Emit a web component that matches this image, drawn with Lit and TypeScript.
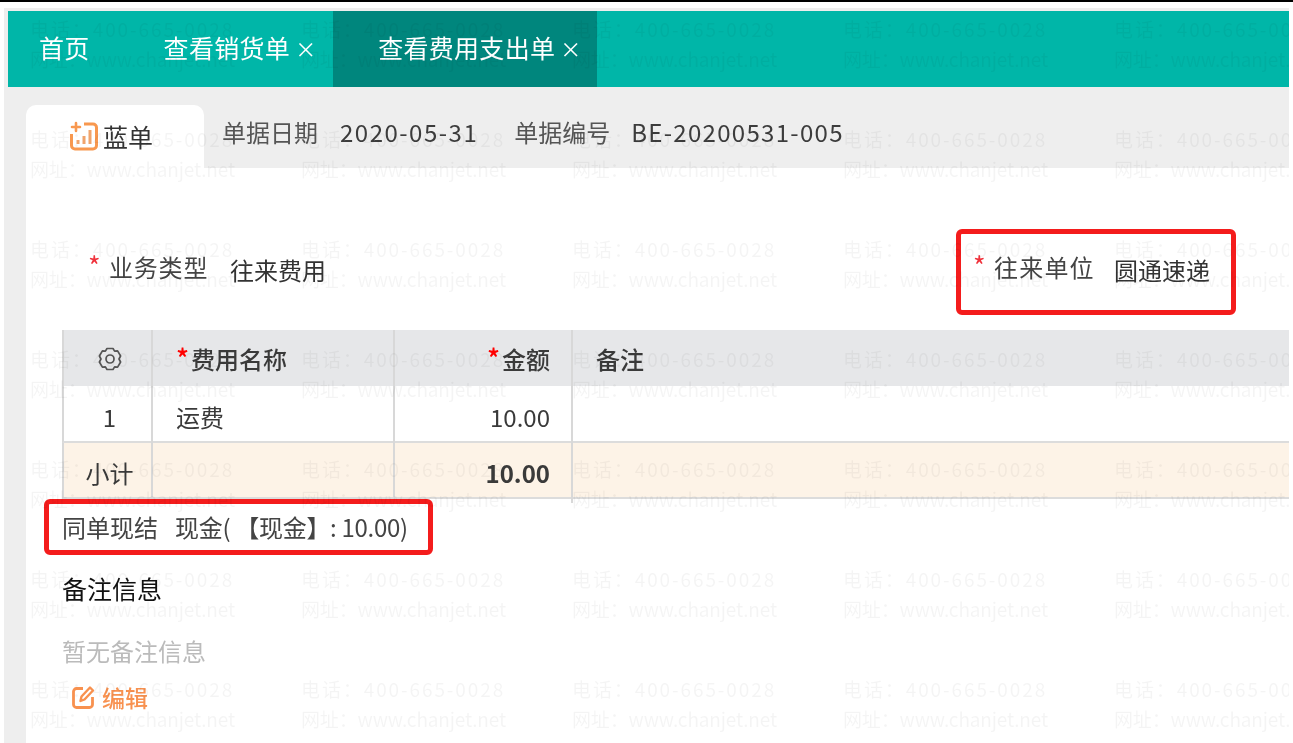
import { LitElement, html, css } from "lit";
import { customElement } from "lit/decorators.js";

const cols = [0, 1, 2, 3, 4];
const rows = [0, 1, 2, 3, 4, 5, 6];

@customElement("app-root")
export class AppRoot extends LitElement {
  static styles = css`
    :host {
      display: block;
      position: relative;
      height: 743px;
      overflow: hidden;
      background: #fff;
      font-family: "Noto Sans CJK SC", "Noto Sans", sans-serif;
      font-size: 24px;
      color: #3c3c3c;
    }
    .topline { height: 2px; background: #000; }
    .page { filter: blur(0.45px); }
    .shell {
      position: relative;
      margin: 6px 4px 0 4px;
      height: 735px;
      background: #eeeeee;
      overflow: hidden;
    }
    .tabs {
      display: flex;
      margin: 3px 0 0 4px;
      height: 76px;
      background: #00b6a8;
      color: #fff;
      font-size: 25px;
      line-height: 73px;
      letter-spacing: 0.3px;
    }
    .tab { display: flex; padding: 0 22px 0 45px; }
    .tab.first { padding: 0 29px 0 31px; }
    .tab.active { background: #00867d; padding-right: 21px; }
    .close { width: 16px; margin-left: 5px; text-align: center; font-size: 21px; line-height: 75px; }
    .band {
      display: flex;
      height: 81px;
      padding-left: 22px;
      box-sizing: border-box;
    }
    .mode {
      display: flex;
      align-items: center;
      justify-content: center;
      align-self: flex-end;
      gap: 5px;
      width: 178px;
      height: 63px;
      padding: 0 7px 2px 0;
      box-sizing: border-box;
      background: #fff;
      border-radius: 10px 10px 0 0;
      font-size: 25px;
      color: #333;
    }
    .mode svg { display: block; }
    .meta {
      display: flex;
      margin: 27px 0 0 18px;
      line-height: 36px;
      height: 36px;
    }
    .meta .k { color: #555; margin-right: 22px; }
    .meta .v { letter-spacing: 1.3px; }
    .meta .v.date { letter-spacing: 1.5px; margin-right: 36px; }
    .meta .k.no2 { margin-right: 21px; }
    .body {
      margin-left: 22px;
      height: 575px;
      background: #fff;
      padding-left: 36px;
    }
    .form {
      display: flex;
      justify-content: space-between;
      height: 162px;
      padding: 79px 79px 0 26px;
      box-sizing: border-box;
    }
    .field { display: flex; height: 40px; line-height: 40px; }
    .star { color: #f0323c; width: 21px; font-size: 27px; line-height: 38px; }
    .field .k { color: #444; width: 121px; letter-spacing: 0.8px; }
    .field .k.wide { letter-spacing: 1.2px; width: 120px; }
    .field .v { color: #333; padding-top: 3px; }
    .table { color: #3a3a3a; }
    .row {
      display: grid;
      grid-template-columns: 89px 242px 178px 1fr;
      height: 57px;
      line-height: 61px;
      box-sizing: border-box;
      border-bottom: 2px solid #dcdcdc;
      border-left: 2px solid #d8d8d8;
    }
    .row > div {
      border-right: 2px solid #d8d8d8;
      padding: 0 23px;
      white-space: nowrap;
    }
    .row > div:last-child { border-right: 0; }
    .row .idx { padding: 0 0 0 4px; text-align: center; display: flex; align-items: center; justify-content: center; }
    .row .num { text-align: right; padding-right: 21px; }
    .row.head { background: #e6e7e9; font-weight: 500; border-bottom: 0; height: 56px; line-height: 58px; }
    .row.sub { background: #fdf3e7; height: 56px; line-height: 60px; }
    .row .bold { font-weight: 700; }
    .req { color: #f00; font-weight: 500; font-size: 27px; line-height: 1; margin-right: 2px; }
    .cash { display: flex; gap: 17px; height: 56px; line-height: 56px; color: #444; }
    .amount { letter-spacing: -0.3px; }
    .title { margin-top: 13px; line-height: 40px; font-size: 25px; color: #111; }
    .empty { margin-top: 23px; line-height: 40px; color: #bbbbbb; }
    .edit {
      display: flex;
      align-items: center;
      gap: 7px;
      margin: 6px 0 0 10px;
      line-height: 40px;
      height: 40px;
      color: #f8914f;
      font-weight: 500;
      font-size: 23px;
    }
    .mark {
      position: absolute;
      left: 26px;
      top: 6px;
      display: grid;
      grid-template-columns: repeat(5, 271px);
      grid-auto-rows: 110px;
      pointer-events: none;
      color: rgba(0, 0, 0, 0.042);
      font-size: 19px;
      line-height: 30px;
    }
    .mark .l1 { letter-spacing: 1.9px; white-space: nowrap; }
    .mark .l2 { white-space: nowrap; letter-spacing: -0.15px; }
    .callout {
      position: absolute;
      border: 5px solid #f41c1c;
      border-radius: 6px;
      box-sizing: border-box;
      pointer-events: none;
    }
    .c1 { left: 952px; top: 221px; width: 280px; height: 86px; }
    .c2 { left: 40px; top: 491px; width: 389px; height: 56px; }
  `;

  render() {
    return html`
      <div class="topline"></div>
      <div class="page">
        <div class="shell">
          <div class="tabs">
            <div class="tab first">首页</div>
            <div class="tab">查看销货单<span class="close">×</span></div>
            <div class="tab active">查看费用支出单<span class="close">×</span></div>
          </div>
          <div class="band">
            <div class="mode">
              <svg width="28" height="30" viewBox="0 0 28 30" fill="none" stroke="#f8984f">
                <path d="M14 3h9a3.5 3.5 0 0 1 3.5 3.5v18a3.5 3.5 0 0 1-3.5 3.5H5a3.5 3.5 0 0 1-3.5-3.5V13" stroke-width="3"/>
                <path d="M6 2v8M2 6h8" stroke-width="2.6" stroke-linecap="round"/>
                <path d="M8 19v4M14 15v8M20 9v14" stroke="#f0a46c" stroke-width="3"/>
              </svg>
              <span>蓝单</span>
            </div>
            <div class="meta">
              <span class="k">单据日期</span><span class="v date">2020-05-31</span>
              <span class="k no2">单据编号</span><span class="v">BE-20200531-005</span>
            </div>
          </div>
          <div class="body">
            <div class="form">
              <div class="field"><span class="star">*</span><span class="k">业务类型</span><span class="v">往来费用</span></div>
              <div class="field"><span class="star">*</span><span class="k wide">往来单位</span><span class="v">圆通速递</span></div>
            </div>
            <div class="table">
              <div class="row head">
                <div class="idx">
                  <svg width="24" height="26" viewBox="0 0 24 26" fill="none" stroke="#555" stroke-width="1.7" stroke-linejoin="round">
                    <path d="M9 2.5h6l1.6 2.6 3-.2 3 5.1-1.6 3 1.6 3-3 5.1-3-.2L15 23.5H9l-1.6-2.6-3 .2-3-5.1 1.6-3-1.6-3 3-5.1 3 .2z"/>
                    <circle cx="12" cy="13" r="4"/>
                  </svg>
                </div>
                <div><span class="req">*</span>费用名称</div>
                <div class="num"><span class="req">*</span>金额</div>
                <div>备注</div>
              </div>
              <div class="row">
                <div class="idx">1</div><div>运费</div><div class="num">10.00</div><div></div>
              </div>
              <div class="row sub">
                <div class="idx">小计</div><div></div><div class="num bold">10.00</div><div></div>
              </div>
            </div>
            <div class="cash"><span>同单现结</span><span class="amount">现金( 【现金】: 10.00)</span></div>
            <div class="title">备注信息</div>
            <div class="empty">暂无备注信息</div>
            <div class="edit">
              <svg width="23" height="24" viewBox="0 0 23 24" fill="none" stroke="#f8914f" stroke-linejoin="round">
                <path d="M11 3.5H4.5a3 3 0 0 0-3 3v13a3 3 0 0 0 3 3h13a3 3 0 0 0 3-3V12" stroke-width="2.8"/>
                <path d="M8.5 16l1-4.5L18 2.5l3 3-8.5 9z" stroke-width="2.4"/>
              </svg>
              <span>编辑</span>
            </div>
          </div>
          <div class="callout c1"></div>
          <div class="callout c2"></div>
          <div class="mark">
            ${rows.map(() =>
              cols.map(
                () => html`<div class="tile">
                  <div class="l1">电话：400-665-0028</div>
                  <div class="l2">网址：www.chanjet.net</div>
                </div>`
              )
            )}
          </div>
        </div>
      </div>
    `;
  }
}
